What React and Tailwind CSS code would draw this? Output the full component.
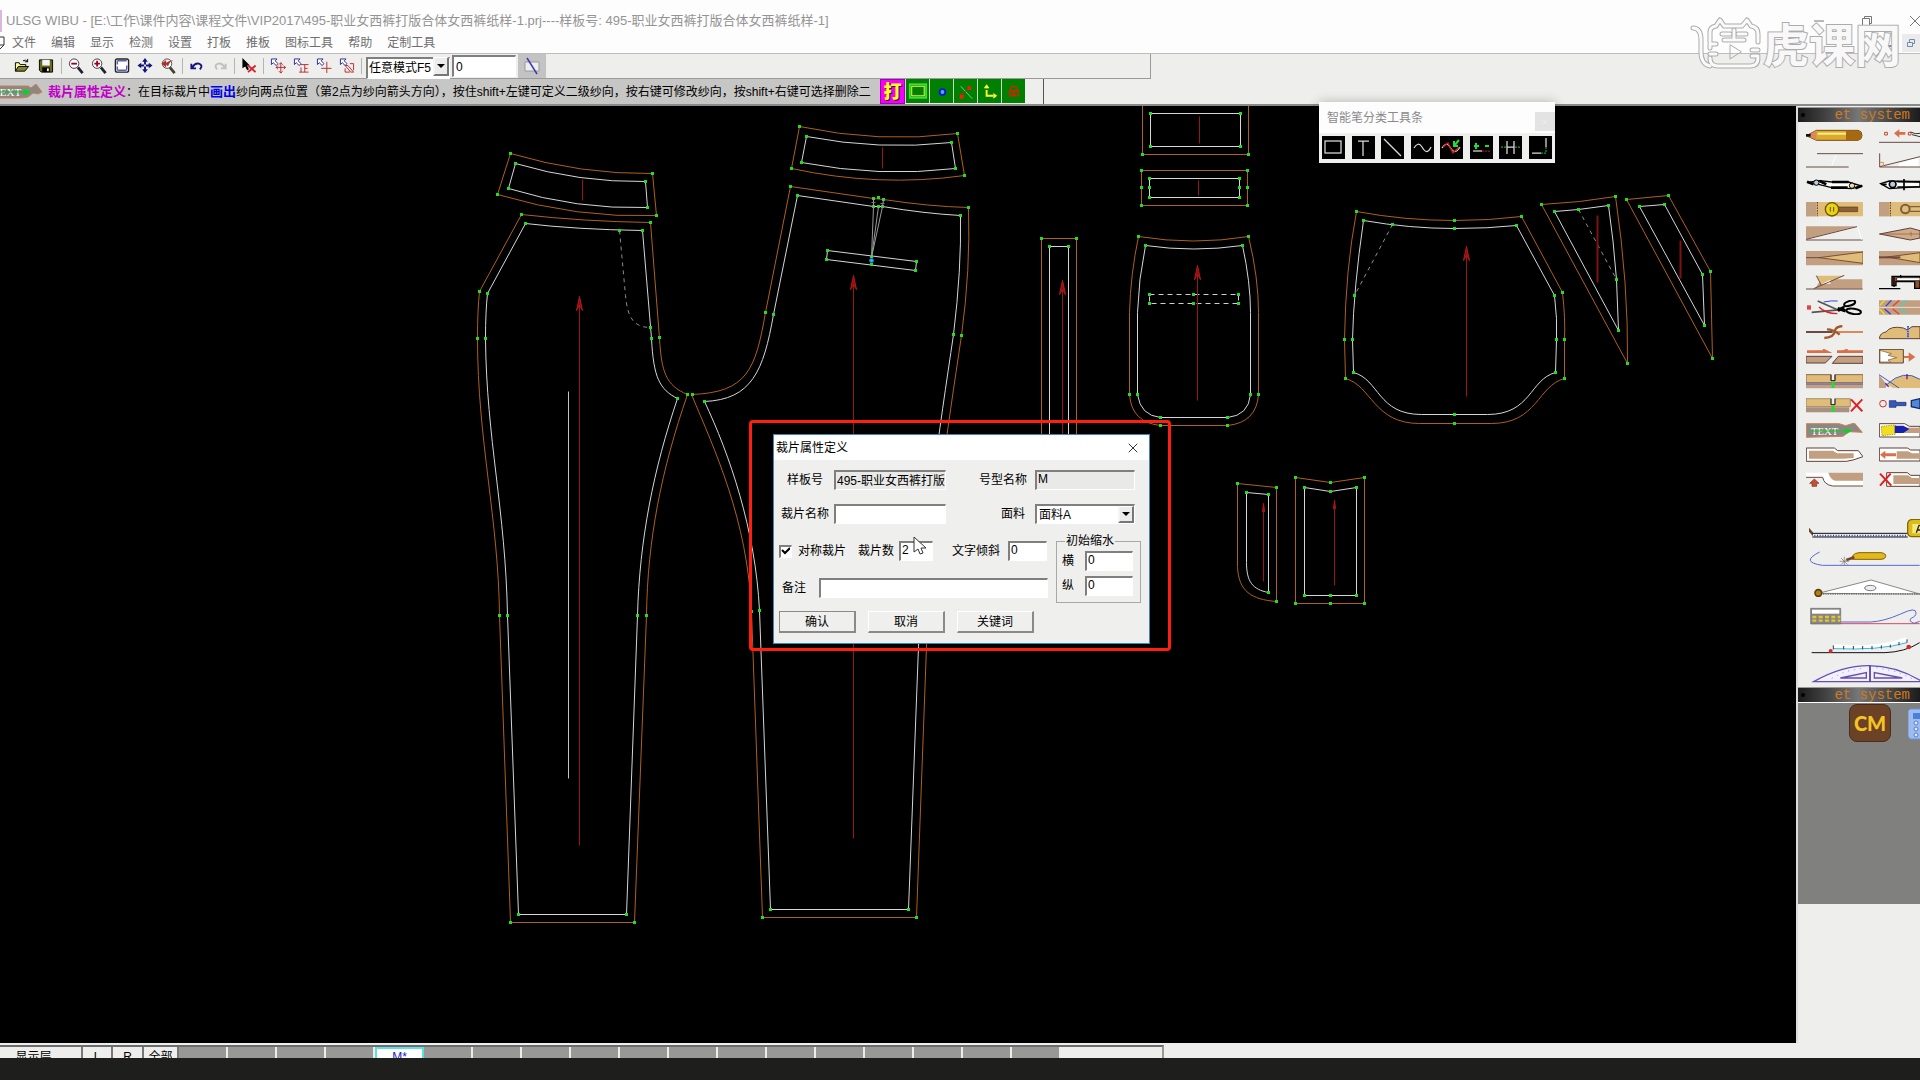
import { X } from "lucide-react";

const menus = ["文件", "编辑", "显示", "检测", "设置", "打板", "推板", "图标工具", "帮助", "定制工具"];

const sunken =
  "border-t-2 border-l-2 border-r border-b border-t-[#7f7f7f] border-l-[#7f7f7f] border-r-white border-b-white";

/* ---------- top toolbar ---------- */

const toolbarGroups = [
  [
    {
      name: "新建",
      art: <path d="M-8 1H2l4 4v11H-8zM2 1v4h4" fill="#fff" stroke="#000" />,
    },
    {
      name: "打开",
      art: (
        <>
          <path d="M1 14V5h4l1 2h6v3" fill="#ffff9c" stroke="#000" />
          <path d="M1 14l3-5h11l-4 5z" fill="#84842a" stroke="#000" />
          <path d="M9 3q3-2 5 1m0-3v3h-3" fill="none" stroke="#000" />
        </>
      ),
    },
    {
      name: "保存",
      art: (
        <>
          <path d="M1 2h14v13H3l-2-2z" fill="#6b6b1c" stroke="#000" />
          <path d="M4 2h8v6H4z" fill="#f4f4f4" />
          <path d="M4 10h8v5H4z" fill="#000" />
          <path d="M9 11h2v3H9z" fill="#eee" />
        </>
      ),
    },
  ],
  [
    {
      name: "缩小",
      art: (
        <>
          <circle cx="6" cy="6" r="5" fill="#fff" stroke="#334" />
          <path d="M10 10l5 6" stroke="#223" strokeWidth="3" />
          <path d="M3 6h6" stroke="#a00020" strokeWidth="2" />
        </>
      ),
    },
    {
      name: "放大",
      art: (
        <>
          <circle cx="6" cy="6" r="5" fill="#fff" stroke="#334" />
          <path d="M10 10l5 6" stroke="#223" strokeWidth="3" />
          <path d="M3 6h6M6 3v6" stroke="#a00020" strokeWidth="2" />
        </>
      ),
    },
    {
      name: "全屏",
      art: (
        <>
          <rect x="1" y="1" width="14" height="14" rx="2" fill="#fff" stroke="#222" strokeWidth="1.5" />
          <path d="M3 7V4q0-1 1-1h9M3 9v3q0 1 1 1h8q1 0 1-2V8" fill="none" stroke="#5563b5" strokeWidth="1.5" />
        </>
      ),
    },
    {
      name: "移动",
      art: (
        <>
          <path d="M8 2v12M2 8h12" stroke="#14147c" strokeDasharray="5 2" strokeWidth="2" />
          <path d="M8 0l3 4H5zM8 16l3-4H5zM0 8l4-3v6zM16 8l-4-3v6z" fill="#14147c" />
        </>
      ),
    },
    {
      name: "上一视图",
      art: (
        <>
          <circle cx="7" cy="6" r="5" fill="#fff" stroke="#444" />
          <path d="M10 10l5 6" stroke="#443" strokeWidth="3" />
          <path d="M1 6l5-4v3q5-3 8-3-4 1-6 7L6 7v3z" fill="#b0302a" />
        </>
      ),
    },
  ],
  [
    {
      name: "撤销",
      art: (
        <path d="M2 6v5h5M3 10q3-5 7-4 5 2 1 6" fill="none" stroke="#14147c" strokeWidth="2" />
      ),
    },
    {
      name: "重做",
      art: (
        <path d="M14 6v5H9M13 10q-3-5-7-4-5 2-1 6" fill="none" stroke="#c0c0c0" strokeWidth="2" />
      ),
    },
  ],
  [
    {
      name: "删除",
      art: (
        <>
          <path d="M1 0l8 8H6l2 4-2 1-2-4-3 2z" fill="#000" />
          <path d="M7 8l8 7M15 8l-8 7" stroke="#d3232c" strokeWidth="2" />
        </>
      ),
    },
  ],
  [
    { name: "定点移动", art: <ArrowMark><path d="M11 5v11M6 10h10M9 7l2-2 2 2M9 14l2 2 2-2M8 8l-2 2 2 2M14 8l2 2-2 2" /></ArrowMark> },
    { name: "对正", art: <ArrowMark><path d="M7 7h9M6 15h10M12 7v8M8 10v5M12 11h3" /></ArrowMark> },
    { name: "十字", art: <ArrowMark><path d="M11 4v12M5 11h11" /></ArrowMark> },
    { name: "镜像", art: <ArrowMark><path d="M6 8h3l6 7h-3zM11 6h4v7M6 11v4h5" /></ArrowMark> },
  ],
];

function ArrowMark({ children }) {
  return (
    <>
      <path d="M1 1h6L5 3l3 3-2 2-3-3-2 2z" fill="#fff" stroke="#25259a" />
      <g fill="none" stroke="#b5292d">
        {children}
      </g>
    </>
  );
}

function Toolbar() {
  return (
    <div className="flex h-[25px] bg-[#eeeeec]">
      <div className="flex w-[1151px] items-center border-r border-b border-[#9a9a9a]">
        {toolbarGroups.map((group, i) => (
          <div
            key={i}
            className={
              i === 0
                ? "-ml-[10px] flex gap-2 border-r border-[#b4b4b4] pr-[7px]"
                : "flex gap-[7px] border-r border-[#b4b4b4] px-[6px]"
            }
          >
            {group.map((t) => (
              <button key={t.name} aria-label={t.name} className="h-4 w-4">
                <svg viewBox="0 0 16 17" className="h-4 w-4">
                  {t.art}
                </svg>
              </button>
            ))}
          </div>
        ))}
        <div className="relative ml-[4px] h-[22px] w-[84px]">
          <select
            aria-label="模式"
            className={`h-full w-full appearance-none bg-white pl-px text-xs leading-4 text-black ${sunken}`}
          >
            <option>任意模式F5</option>
          </select>
          <DropArrow />
        </div>
        <input
          aria-label="数值"
          defaultValue="0"
          className={`ml-[2px] h-[22px] w-16 bg-white pl-[2px] text-xs leading-4 ${sunken}`}
        />
        <button aria-label="线条" className="ml-[2px] flex h-6 w-7 items-center justify-center bg-[#c3c3c3]">
          <svg viewBox="0 0 18 18" className="h-[18px] w-[18px]">
            <path d="M2 5h14v9H2z" fill="#eee" stroke="#999" />
            <path d="M4 1l10 16" stroke="#3b3bae" strokeWidth="1.5" />
          </svg>
        </button>
      </div>
    </div>
  );
}

function DropArrow() {
  return (
    <span className="pointer-events-none absolute top-[2px] right-[1px] bottom-[1px] flex w-4 items-center justify-center border-t border-l-2 border-r-2 border-b-2 border-t-white border-l-[#f4f4f4] border-r-[#777] border-b-[#777] bg-[#ececec]">
      <svg viewBox="0 0 8 4" className="h-1 w-2">
        <path d="M0 0h8L4 4z" fill="#000" />
      </svg>
    </span>
  );
}

/* ---------- hint bar ---------- */

const greenTools = [
  { name: "矩形", art: <rect x="6" y="6" width="13" height="10" fill="none" stroke="#ffff30" strokeWidth="1" />, halo: true },
  { name: "点", art: <><circle cx="13" cy="12" r="4" fill="#0018d8" /><circle cx="13" cy="12" r="2" fill="#5aa6ff" /></> },
  { name: "线", art: <><path d="M7 6l12 13" stroke="#4fe0b0" /><path d="M14 6h4v4h-4zM6 15h4v4H6z" fill="#f02010" /><path d="M12 12l5-5M6 15l6-3" stroke="#c22810" /></> },
  { name: "坐标", art: <><path d="M9 17V6M9 16h9" stroke="#ffff30" strokeWidth="2" fill="none" strokeDasharray="7 2" /><path d="M6 8l3-4 3 4zM16 13l4 3-4 3z" fill="#ffff30" /></> },
  { name: "锁", art: <path d="M8 16h9v-5H8zM9 11V9q0-3 3-3t4 3v2M10 14h5M12 10v6" fill="none" stroke="#c82800" strokeWidth="1.5" /> },
];

function HintBar() {
  return (
    <div className="flex h-[27px] border-b-2 border-[#8a8a8a] bg-[#eeeeec]">
      <div className="flex w-[1044px] border-r border-[#555] bg-[#eeeeec]">
        <div className="flex w-[880px] items-center overflow-hidden bg-[#c6c6c4]">
          <svg viewBox="0 0 42 16" className="h-4 w-[42px] shrink-0">
            <path d="M0 2h28l3 2 5-4 6 8-4 2-5-1-5 4-6 1H0z" fill="#8b8883" stroke="#c88052" />
            <text x="-7" y="12" fontSize="11" fontFamily="Liberation Serif" fill="#fff">TEXT</text>
            <path d="M0 8h26" stroke="#00c520" />
            <path d="M24 5l7 3-7 3z" fill="#00d820" />
          </svg>
          <p className="ml-[6px] text-xs leading-4 whitespace-nowrap text-black">
            <b className="text-[13px] text-[#c000c8]">裁片属性定义</b>
            ：在目标裁片中<b className="text-[13px] text-[#0000f0]">画出</b>
            纱向两点位置（第2点为纱向箭头方向），按住shift+左键可定义二级纱向，按右键可修改纱向，按shift+右键可选择删除二
          </p>
        </div>
        <button className="h-[25px] w-[25px] border border-[#a000c0] bg-[#f400f4] text-lg leading-5 font-black text-[#ffff20] [text-shadow:1px_1px_0_#222]">
          打
        </button>
        {greenTools.map((t) => (
          <button key={t.name} aria-label={t.name} className="h-6 w-6 border-l border-[#c8d8c8] bg-[#007f00]">
            <svg viewBox="0 0 24 23" className="h-[23px] w-[23px]">
              {t.halo && <rect x="4" y="4" width="17" height="14" fill="none" stroke="#38e038" strokeWidth="2" />}
              {t.art}
            </svg>
          </button>
        ))}
      </div>
    </div>
  );
}

/* ---------- pattern canvas ---------- */

const pieces = [
  {
    seam: "M511 154Q582 175 653 174L657 216Q578 219 498 195Z",
    net: "M516 164Q580 183 646 182L648 208Q577 210 509 189Z",
    dots: [[511, 154], [653, 174], [657, 216], [498, 195], [516, 164], [646, 182], [648, 208], [509, 189]],
    grain: [583, 180, 201],
  },
  {
    seam: "M522 215Q584 222 651 223L660 339C662 372 666 386 688 395C662 470 648 540 647 616L635 923H511L500 616C499 520 478 440 478 339Q478 310 480 292Z",
    net: "M526 224Q577 230 643 231L652 339C654 378 660 390 678 399C654 470 640 540 638 616L627 915H519L508 616C506 510 487 440 486 339Q486 312 488 294Z",
    dash: "M620 231L626 296C628 318 634 328 651 328",
    dots: [[522, 215], [651, 223], [660, 338], [688, 395], [647, 616], [635, 923], [511, 923], [500, 616], [478, 339], [480, 292], [526, 224], [620, 231], [643, 231], [651, 328], [652, 339], [678, 399], [638, 616], [627, 915], [519, 915], [508, 616], [486, 339], [488, 294]],
    grain: [580, 297, 846],
    arrow: true,
  },
  {
    seam: "M800 127Q880 144 958 134L965 176Q880 188 792 169Z",
    net: "M807 137Q880 151 952 143L956 169Q880 178 802 163Z",
    dots: [[800, 127], [958, 134], [965, 176], [792, 169], [807, 137], [952, 143], [956, 169], [802, 163]],
    grain: [883, 148, 169],
  },
  {
    seam: "M791 187L874 199L884 200Q930 207 969 208Q971 270 962 336C948 430 931 540 927 647L917 918H763L752 612C748 520 715 450 692 395C748 393 756 370 766 313Z",
    net: "M798 196L874 207H883Q925 214 961 216Q962 270 954 335C940 430 923 540 919 647L909 910H771L760 611C756 530 730 455 705 402C752 400 764 372 774 315ZM828 251L917 262L916 271L827 260Z",
    dots: [[791, 187], [874, 199], [879, 198], [884, 200], [969, 208], [962, 336], [917, 918], [763, 918], [752, 612], [693, 395], [766, 313], [798, 196], [874, 207], [879, 207], [883, 207], [961, 216], [954, 335], [909, 910], [771, 910], [760, 611], [705, 402], [774, 315], [828, 251], [917, 262], [916, 271], [827, 260], [872, 257], [872, 265]],
    grain: [854, 276, 839],
    arrow: true,
  },
  {
    seam: "M1143 100V155H1249V100",
    net: "M1151 114H1241V147H1151Z",
    dots: [[1143, 155], [1249, 155], [1151, 114], [1241, 114], [1241, 147], [1151, 147]],
    grain: [1200, 117, 144],
  },
  {
    seam: "M1142 171H1248V206H1142Z",
    net: "M1150 179H1240V198H1150Z",
    dots: [[1142, 171], [1248, 171], [1248, 206], [1142, 206], [1142, 188], [1248, 188], [1150, 179], [1240, 179], [1240, 198], [1150, 198], [1150, 188], [1240, 188]],
    grain: [1199, 181, 196],
  },
  {
    seam: "M1042 560V239H1077V560",
    net: "M1050 560V247H1069V560",
    dots: [[1042, 239], [1077, 239], [1050, 247], [1069, 247]],
    grain: [1063, 281, 560],
    arrow: true,
  },
  {
    seam: "M1139 237Q1194 246 1249 237Q1259 278 1259 313V395Q1257 423 1228 426H1161Q1132 423 1130 395V313Q1131 275 1139 237Z",
    net: "M1146 246Q1194 253 1243 246Q1251 283 1251 313V395Q1249 416 1228 418H1161Q1141 416 1138 395V313Q1139 280 1146 246Z",
    thickDash: "M1150 295H1239V304H1150Z",
    dots: [[1139, 237], [1249, 237], [1259, 395], [1228, 426], [1161, 426], [1130, 395], [1146, 246], [1243, 246], [1251, 395], [1228, 418], [1161, 418], [1138, 395], [1150, 295], [1194, 295], [1239, 295], [1150, 304], [1194, 304], [1239, 304]],
    grain: [1198, 266, 401],
    arrow: true,
  },
  {
    seam: "M1357 212Q1405 221 1455 221Q1490 221 1522 217L1563 293Q1566 320 1565 340V379C1538 386 1538 424 1492 424H1420C1374 424 1372 386 1346 379L1345 340Q1346 270 1357 212Z",
    net: "M1364 221Q1410 229 1455 229Q1488 229 1517 226L1555 296Q1558 320 1557 340L1556 373C1530 380 1532 415 1488 415H1422C1378 415 1380 380 1354 373L1353 340Q1354 290 1364 221Z",
    dash: "M1393 225L1355 296",
    dots: [[1357, 212], [1455, 221], [1522, 217], [1563, 293], [1565, 340], [1565, 379], [1455, 424], [1346, 379], [1345, 340], [1364, 221], [1393, 225], [1455, 229], [1517, 226], [1555, 296], [1557, 340], [1556, 373], [1455, 415], [1354, 373], [1353, 340], [1355, 296]],
    grain: [1467, 247, 397],
    arrow: true,
  },
  {
    seam: "M1542 205L1580 202L1616 197Q1629 285 1628 364Z",
    net: "M1555 212L1579 210L1609 206Q1614 240 1617 280L1619 331Z",
    dash: "M1579 210L1617 280",
    dots: [[1542, 205], [1616, 197], [1628, 364], [1555, 212], [1579, 210], [1609, 206], [1617, 280], [1619, 331]],
    grain: [1598, 216, 283],
    wide: true,
  },
  {
    seam: "M1627 200L1669 196L1711 272L1713 359Z",
    net: "M1640 207L1665 205L1703 275L1705 326Z",
    dots: [[1627, 200], [1669, 196], [1711, 272], [1713, 359], [1640, 207], [1665, 205], [1703, 275], [1705, 326]],
    grain: [1681, 241, 279],
    wide: true,
  },
  {
    seam: "M1238 484L1277 488V602C1252 600 1239 592 1238 567Z",
    net: "M1247 493L1269 495V593C1253 590 1247 582 1247 563Z",
    dots: [[1238, 484], [1277, 488], [1277, 602], [1247, 493], [1269, 495], [1269, 593]],
    grain: [1264, 504, 582],
    shortArrow: true,
  },
  {
    seam: "M1296 478L1331 483L1365 478V604H1296Z",
    net: "M1305 488L1331 492L1357 488V596H1305Z",
    dots: [[1296, 478], [1331, 483], [1365, 478], [1365, 604], [1331, 604], [1296, 604], [1305, 488], [1331, 492], [1357, 488], [1357, 596], [1331, 596], [1305, 596]],
    grain: [1335, 501, 586],
    shortArrow: true,
  },
];

function PatternCanvas() {
  return (
    <svg className="absolute inset-0 h-full w-full" role="img" aria-label="裁片">
      <g transform="translate(-0.5 -106.5)" fill="none">
        {pieces.map((p, i) => (
          <g key={i}>
            <path d={p.seam} stroke="#b0601c" />
            <path d={p.net} stroke="#d6d6d6" />
            {p.dash && <path d={p.dash} stroke="#8c8c8c" strokeDasharray="4 4" />}
            {p.thickDash && <path d={p.thickDash} stroke="#d0d0d0" strokeDasharray="5 4" />}
            <path
              d={`M${p.grain[0]} ${p.grain[1]}V${p.grain[2]}`}
              stroke={p.wide ? "#7c1212" : "#981616"}
              strokeWidth={p.wide ? 2 : 1}
            />
            {p.arrow && (
              <path
                d={`M${p.grain[0] - 3} ${p.grain[1] + 14}L${p.grain[0]} ${p.grain[1]}l3 14l-3 -5z`}
                fill="#8c1010"
                stroke="#b41818"
              />
            )}
            {p.shortArrow && (
              <path
                d={`M${p.grain[0] - 1} ${p.grain[1] + 8}L${p.grain[0]} ${p.grain[1]}l1 8z`}
                fill="#8c1010"
                stroke="#b41818"
              />
            )}
            {p.dots.map(([x, y]) => (
              <rect key={`${x}-${y}`} x={x - 1.5} y={y - 1.5} width="3" height="3" fill="#1fe01f" />
            ))}
          </g>
        ))}
        <path d="M569 392V779" stroke="#c4c4c4" />
        <path d="M872 258L874 207M872 258L879 207M872 258L883 207M874 199V207M884 200L883 207" stroke="#9a9a9a" />
        <path d="M872 203h4M881 204h4" stroke="#b050c0" />
        <circle cx="872" cy="261" r="2" fill="#20c0d0" stroke="#2060ff" />
      </g>
    </svg>
  );
}

/* ---------- floating pen toolbar ---------- */

const penTools = [
  { name: "矩形", art: <rect x="3" y="5" width="16" height="12" /> },
  { name: "丁字尺", art: <path d="M6 5h11M11 5v15" /> },
  { name: "直线", art: <path d="M3 3l17 17" /> },
  { name: "曲线", art: <path d="M3 12q4-7 8-1 5 9 9 0" /> },
  { name: "修正曲线", art: <><path d="M2 12q4-7 8-1 5 9 10 0" /><path d="M3 11l5-4 5 10 6-6" stroke="#e01818" /><path d="M19 4l-5 6m0-5v5h4" stroke="#20e030" strokeWidth="2" /></> },
  { name: "加减", art: <><path d="M4 10h5M6 7v6M15 10h4" stroke="#20e030" strokeWidth="2" /><path d="M3 15h9" /><path d="M12 15h8" stroke="#b01010" strokeDasharray="2 1" /></> },
  { name: "等分", art: <><path d="M8 5v13M15 5v13M8 11h7" /><path d="M2 11h5M16 11h5" stroke="#20a030" strokeDasharray="2 1" /></> },
  { name: "角连接", art: <><path d="M3 17h9M17 2v9" /><path d="M12 17h5v-6" stroke="#10a020" strokeDasharray="2 1" /></> },
];

function PenBar() {
  return (
    <div className="absolute -top-1 left-[1319px] w-[236px] bg-[#efefed] shadow-[0_0_10px_rgba(0,0,0,0.25)]">
      <div className="flex h-[31px] items-center justify-between bg-[#fdfdfd] pl-2">
        <h2 className="text-xs leading-4 text-[#8a8a8a]">智能笔分类工具条</h2>
        <button aria-label="关闭" className="mt-2 flex h-[19px] w-5 items-center justify-center bg-[#e3e3e3]">
          <X size={8} color="#f0f0f0" />
        </button>
      </div>
      <div className="flex justify-between px-[3px] pt-[3px] pb-1">
        {penTools.map((t) => (
          <button key={t.name} aria-label={t.name} className="h-[23px] w-[23px] bg-black">
            <svg viewBox="0 0 23 23" className="h-[23px] w-[23px]" fill="none" stroke="#dcdcdc" strokeWidth="1.25">
              {t.art}
            </svg>
          </button>
        ))}
      </div>
    </div>
  );
}

/* ---------- piece property dialog ---------- */

function Field({ id, label, width, value, gray, className }) {
  return (
    <div className={`flex items-center justify-end ${className || ""}`}>
      <label htmlFor={id} className="whitespace-nowrap">
        {label}
      </label>
      <input
        id={id}
        defaultValue={value}
        readOnly={gray}
        className={`h-5 min-w-0 pb-[3px] pl-px leading-4 ${sunken} ${gray ? "bg-[#e9e9e7]" : "bg-white"} ${width}`}
      />
    </div>
  );
}

function PropertyDialog() {
  const raised =
    "h-[22px] w-[77px] border-t border-l border-r-2 border-b-2 border-t-white border-l-white border-r-[#8a8a8a] border-b-[#8a8a8a] bg-[#efefed]";
  return (
    <div className="absolute top-[314px] left-[749px] rounded border-[3px] border-[#ff1e10] pt-[11px] pr-[18px] pb-1 pl-[21px]">
      <div className="w-[377px] border border-[#3f86bd] bg-[#efefed] text-xs leading-4 text-black">
        <div className="flex h-[25px] items-center justify-between bg-white pr-2 pl-[2px]">
          <h2>裁片属性定义</h2>
          <button aria-label="关闭">
            <X size={16} strokeWidth={1.5} color="#333" />
          </button>
        </div>
        <form className="px-1 pt-[10px] pb-[10px]" onSubmit={(e) => e.preventDefault()}>
          <div className="flex justify-between pr-[10px]">
            <Field id="style" label="样板号" width="ml-[11px] w-28" value="495-职业女西裤打版合体女西裤纸样-1" gray className="pl-[9px]" />
            <Field id="size" label="号型名称" width="ml-2 w-[100px]" value="M" gray />
          </div>
          <div className="mt-[14px] flex justify-between pr-[10px]">
            <Field id="piece" label="裁片名称" width="ml-[5px] w-28" className="pl-[3px]" />
            <div className="flex items-center">
              <label htmlFor="fabric">面料</label>
              <div className="relative ml-[10px] h-5 w-[100px]">
                <select id="fabric" className={`h-full w-full appearance-none bg-white pl-[2px] text-xs leading-4 ${sunken}`}>
                  <option>面料A</option>
                </select>
                <DropArrow />
              </div>
            </div>
          </div>
          <div className="mt-[9px] flex gap-2">
            <div className="w-[270px] pt-2 pl-px">
              <div className="flex items-center">
                <label className="flex items-center gap-[6px] whitespace-nowrap">
                  <span className={`relative flex h-[13px] w-[13px] bg-white ${sunken}`}>
                    <input type="checkbox" defaultChecked className="peer h-full w-full appearance-none" />
                    <svg viewBox="0 0 9 9" className="pointer-events-none absolute inset-0 hidden h-[9px] w-[9px] peer-checked:block">
                      <path d="M1 3l3 3 5-5" fill="none" stroke="#000" strokeWidth="2" />
                    </svg>
                  </span>
                  对称裁片
                </label>
                <Field id="count" label="裁片数" width="ml-[5px] w-[34px]" value="2" className="ml-3" />
                <Field id="slant" label="文字倾斜" width="ml-2 w-[39px]" value="0" className="ml-[19px]" />
              </div>
              <Field id="note" label="备注" width="ml-[13px] flex-1" className="mt-[17px] pl-[3px]" />
            </div>
            <fieldset className="h-[70px] w-[84px] border border-[#a8a8a8] pl-[5px]">
              <legend className="ml-[3px] px-px leading-4">初始缩水</legend>
              <Field id="weft" label="横" width="ml-[11px] w-12" value="0" className="mt-[2px] mr-[7px]" />
              <Field id="warp" label="纵" width="ml-[11px] w-12" value="0" className="mt-[5px] mr-[7px]" />
            </fieldset>
          </div>
          <div className="mt-2 flex gap-3 pl-px">
            <button className={`${raised} outline outline-[#8a8a8a] -outline-offset-1`}>确认</button>
            <button className={raised}>取消</button>
            <button className={raised}>关键词</button>
          </div>
        </form>
      </div>
    </div>
  );
}

function MousePointer() {
  return (
    <svg viewBox="0 0 13 20" className="absolute top-[430px] left-[913px] h-5 w-[13px]">
      <path d="M1 1v15l4-3 2 5 3-1-2-5h5z" fill="#fff" stroke="#333" />
    </svg>
  );
}

/* ---------- right tool box ---------- */

const line = { fill: "none", stroke: "#6b4a44", strokeWidth: 3 };

// each drawing keeps three units to one screen pixel
const leftTools = [
  { name: "铅笔", y: 82, art: <><path d="M78 105l30-16h125q12 2 12 15t-12 15H108z" fill="#dba92c" stroke="#7b4a18" strokeWidth="3" /><path d="M108 89v30L82 105z" fill="#d88a58" /><path d="M112 99h86" stroke="#fff08a" strokeWidth="6" /><path d="M197 90h34q12 2 12 15t-12 14h-34z" fill="#a56a10" /><path d="M77 104h14" stroke="#111" strokeWidth="8" /></> },
  { name: "平行线", y: 156, art: <><path d="M110 158h138M77 198h128" {...line} /><path d="M154 194l14-32" stroke="#fff" strokeWidth="3" /></> },
  { name: "圆规", y: 228, art: <><path d="M82 244l36-5 36 4h50l40 12-30 8-60-3-36-9z" fill="#fff" stroke="#000" strokeWidth="4" /><path d="M118 240l20 10M155 243h50M152 260h50M80 242l20 8M245 254l-20 8" stroke="#000" strokeWidth="8" /><circle cx="108" cy="245" r="8" fill="#bcd" stroke="#000" strokeWidth="3" /><circle cx="215" cy="254" r="8" fill="#eda" stroke="#000" strokeWidth="3" /></> },
  { name: "扣眼", y: 304, art: <><path d="M77 304h171v43H77z" fill="#dfbd78" /><path d="M77 304h30v43H77z" fill="#c29f80" /><path d="M111 304v43" stroke="#503028" strokeWidth="3" strokeDasharray="5 3" /><path d="M170 319h62v14h-62z" fill="#8b6035" stroke="#5a3818" strokeWidth="2" /><circle cx="155" cy="326" r="20" fill="#e8d410" stroke="#725010" strokeWidth="4" /><path d="M150 319v14M160 319v14" stroke="#724d10" strokeWidth="3" /></> },
  { name: "角度", y: 377, art: <><path d="M77 378h153L77 416z" fill="#c29f80" /><path d="M77 417l153-38M77 419h170" {...line} /><path d="M232 382l12 36" stroke="#fff" strokeWidth="3" /></> },
  { name: "省道", y: 451, art: <><path d="M77 451h171v43H77z" fill="#c29f80" /><path d="M248 454L116 471l132 17z" fill="#dfbd78" stroke="#7b5030" strokeWidth="3" /><path d="M77 471h40" {...line} /></> },
  { name: "转省", y: 524, art: <><path d="M122 537h124v28H104z" fill="#c29f80" /><path d="M108 526h84l-68 29z" fill="#dfbd78" /><path d="M126 550l24-12v12z" fill="#fff" /><path d="M108 526l15 29M100 565l92-40M77 566h170" {...line} /></> },
  { name: "剪刀", y: 597, art: <><path d="M80 613h12v13H80z" fill="#d84848" /><path d="M112 600l68 30M94 634l90-8" stroke="#555" strokeWidth="5" /><path d="M130 603q25-5 42-3" stroke="#3048d0" strokeWidth="3" fill="none" /><path d="M116 618q20 20 55 20" stroke="#e02020" strokeWidth="4" fill="none" /><path d="M172 628l20-10M172 622l24 8" stroke="#000" strokeWidth="9" /><ellipse cx="208" cy="607" rx="17" ry="7" transform="rotate(-18 208 607)" fill="none" stroke="#000" strokeWidth="6" /><ellipse cx="220" cy="631" rx="22" ry="8" transform="rotate(8 220 631)" fill="none" stroke="#000" strokeWidth="6" /></> },
  { name: "缝合", y: 671, art: <><path d="M77 692h80" stroke="#6a4a42" strokeWidth="6" /><path d="M160 692h88" stroke="#d88a58" strokeWidth="6" /><path d="M132 710q30-2 32-22 2-12 22-14M140 684q20 0 38 16" fill="none" stroke="#a05828" strokeWidth="7" /></> },
  { name: "分割", y: 744, art: <><path d="M77 766h78l-20 20H77zM174 766h74v21h-92z" fill="#c29f80" stroke="#604038" strokeWidth="3" /><path d="M80 752h55m35 0h78" stroke="#d87048" strokeWidth="8" /><path d="M128 742l28 14h-30zM202 742l-34 14h34z" fill="#d87048" /></> },
  { name: "刀口", y: 818, art: <><path d="M77 820h75v18h12v-18h84v24H77z" fill="#dfbd78" stroke="#8a6848" strokeWidth="3" /><path d="M77 846h171v15H77z" fill="#c29f80" /><path d="M77 848h171" stroke="#4858c8" strokeWidth="3" /><path d="M152 820v18h12v-18" fill="none" stroke="#222" strokeWidth="3" /><path d="M158 842v18" stroke="#20e020" strokeWidth="8" /></> },
  { name: "删除刀口", y: 20, art: <><path d="M77 22h75v18h12v-18h46v24H77z" fill="#dfbd78" stroke="#8a6848" strokeWidth="2" /><path d="M77 48h130v15H77z" fill="#a89080" /><path d="M152 22v18h12v-18" fill="none" stroke="#222" strokeWidth="3" /><path d="M158 44v18" stroke="#20e020" strokeWidth="8" /><path d="M212 24l34 36M246 24l-34 36" stroke="#e02020" strokeWidth="6" /></> },
  { name: "裁片属性", y: 94, art: <><path d="M78 96h98l20 6 26-8 24 28-40-2-18 14-110 3z" fill="#8b8883" stroke="#d08050" strokeWidth="3" /><text x="92" y="129" fontFamily="Liberation Serif" fontSize="32" fill="#fff">TEXT</text><path d="M90 118h110" stroke="#10d020" strokeWidth="3" /><path d="M196 108l18 10-18 10z" fill="#10d020" /></> },
  { name: "放缝", y: 167, art: <><path d="M78 170h84l10 8h62l14 18-30 10-20 4H78z" fill="#fff" stroke="#604038" strokeWidth="3" /><path d="M86 178h72l12 8h50v14l-30 2H86z" fill="#c29f80" /></> },
  { name: "缝边", y: 240, art: <><path d="M77 242h171v40h-90q-26-4-30-26H77z" fill="#fff" /><path d="M144 242h104v24h-84q-14-4-20-24z" fill="#c29f80" /><path d="M77 256h50q4 22 30 26h91" {...line} /><path d="M102 261l14 13h-7v9H95v-9h-7z" fill="#c85030" stroke="#703020" strokeWidth="2" /></> },
];

const rightTools = [
  { name: "端移动", y: 82, art: <><path d="M297 125h123" {...line} /><path d="M314 95h8v8h-8zM385 95h8v8h-8z" fill="#fff" stroke="#c04028" strokeWidth="3" /><path d="M342 98l16-12v8h18v8h-18v9z" fill="#d87048" /><path d="M392 94q14 8 28 4M396 102l24 6" {...line} stroke="#333" /></> },
  { name: "量角", y: 156, art: <><path d="M356 188l60-20v30h-60z" fill="#fff" /><path d="M299 157v41h121M299 197l121-30" {...line} /><path d="M300 184h10v12" fill="none" stroke="#e09040" strokeWidth="3" /></> },
  { name: "双圆规", y: 228, art: <><path d="M302 248l26-8 92 3v14l-92 6z" fill="#fff" stroke="#000" strokeWidth="4" /><path d="M352 242h68M352 258h68M372 234v34M304 250h16" stroke="#000" strokeWidth="5" /><circle cx="338" cy="250" r="10" fill="#bcd" stroke="#000" strokeWidth="5" /></> },
  { name: "扣位", y: 304, art: <><path d="M297 304h123v43H297z" fill="#dfbd78" /><path d="M297 304h30v43h-30z" fill="#c29f80" /><path d="M331 304v43" stroke="#503028" strokeWidth="3" strokeDasharray="5 3" /><circle cx="376" cy="325" r="13" fill="none" stroke="#7b6040" strokeWidth="6" /><path d="M388 318h32M388 332h32" stroke="#7b6040" strokeWidth="4" /></> },
  { name: "菱形省", y: 377, art: <><path d="M299 401l92-18 29 8v22l-29 6z" fill="#d0ab88" stroke="#604038" strokeWidth="3" /><path d="M297 401h123M393 394v14" stroke="#905848" strokeWidth="2" /></> },
  { name: "褶", y: 451, art: <><path d="M297 451h123v43H297z" fill="#c29f80" /><path d="M420 456l-98 13 98 17z" fill="#dfbd78" stroke="#7b5030" strokeWidth="3" /><path d="M297 470h64" stroke="#704a38" strokeWidth="6" /></> },
  { name: "缝纫机", y: 524, art: <><path d="M336 528h84v36h-16v-20h-56v12h-12z" fill="#8b5228" stroke="#000" strokeWidth="4" /><path d="M350 532h70v9h-70z" fill="#fff" stroke="#000" strokeWidth="2" /><path d="M297 565h64M342 527v33M362 524v8" stroke="#000" strokeWidth="4" /></> },
  { name: "纹理", y: 597, art: <><path d="M297 598h123v43H297z" fill="#c29f80" /><g fill="none" strokeWidth="4"><path d="M314 598l-14 14M298 624l16 16" stroke="#f0e020" /><path d="M334 598l-17 18M314 624l18 16" stroke="#3840d0" /><path d="M358 598l-20 18M338 624l20 16" stroke="#e04040" /><path d="M380 598l-20 18M360 624l20 16" stroke="#40d8b8" /></g><path d="M297 619h123" stroke="#fff" strokeWidth="2" /></> },
  { name: "拼接", y: 671, art: <><path d="M298 712q2-18 20-20 14-20 52-12l12 6 14-10h24v36z" fill="#dfbd78" stroke="#604038" strokeWidth="3" /><path d="M384 674v38" stroke="#4060e0" strokeWidth="6" strokeDasharray="5 2" /></> },
  { name: "展开", y: 744, art: <><path d="M298 745h72v41h-72z" fill="#dfbd78" stroke="#604038" strokeWidth="3" /><path d="M300 748l34 10-10 5 26 7-26 7 8 6h-32z" fill="#fff" stroke="#7b5030" strokeWidth="2" /><path d="M372 768h16" stroke="#c85838" strokeWidth="5" /><path d="M386 754l20 14-20 14z" fill="#d87048" /></> },
  { name: "弧线", y: 818, art: <><path d="M297 820l24 30-4 10h-20z" fill="#c29f80" /><path d="M320 850q60-50 100-14v24h-80z" fill="#dfbd78" /><path d="M297 820l60 40M320 850q50-48 100-16" fill="none" stroke="#4858b8" strokeWidth="3" /><path d="M381 818v16M316 846l10 10" stroke="#6020b0" strokeWidth="4" /></> },
  { name: "打孔", y: 20, art: <><circle cx="309" cy="37" r="10" fill="none" stroke="#d03030" strokeWidth="3" /><path d="M328 28h20v5h30v10h-30v5h-20z" fill="#3858b8" stroke="#182868" strokeWidth="2" /><path d="M394 28l26-6v30l-26-6z" fill="#5088d8" stroke="#182868" strokeWidth="4" /></> },
  { name: "刷子", y: 94, art: <><path d="M298 96h76l14 8h32v32H298z" fill="#fff" stroke="#604038" strokeWidth="3" /><path d="M370 108h50v16h-50z" fill="#c29f80" /><path d="M304 104l42-4v28l-40 4z" fill="#f0e020" stroke="#807010" strokeWidth="2" strokeDasharray="4 3" /><path d="M344 102h26l18 10-18 12h-26z" fill="#1820b0" /></> },
  { name: "内缝", y: 167, art: <><path d="M298 170h84l10 6h28v33H298z" fill="#fff" stroke="#604038" strokeWidth="3" /><path d="M350 180h34l12 6h24v16h-70z" fill="#c29f80" /><path d="M300 190l16-12v8h32v9h-32v8z" fill="#d87048" /></> },
  { name: "删除缝边", y: 240, art: <><path d="M320 242h62l10 8h28v33H320z" fill="#fff" stroke="#604038" strokeWidth="3" /><path d="M340 250h44l12 8h24v18h-80z" fill="#c29f80" /><path d="M300 245l34 36M332 245l-32 36" stroke="#e02020" strokeWidth="6" /></> },
];

const wideTools = [
  { name: "卷尺", y: 387, art: <><path d="M88 413l12 14v12l-12-14z" fill="#6b4528" /><path d="M98 430h286M98 441h286" stroke="#111" strokeWidth="3" /><path d="M104 437h280" stroke="#2838b8" strokeWidth="5" strokeDasharray="3 5" /><path d="M384 400q2-12 16-12h24v52h-28q-12-2-12-12z" fill="#dcbc18" stroke="#806808" strokeWidth="4" /><path d="M398 402h24v28h-24z" fill="#f4e880" /><path d="M410 428l8-22h4M413 420h8" fill="none" stroke="#222" strokeWidth="4" /></> },
  { name: "割刀", y: 472, art: <><path d="M120 484q-60 30 8 40h292" fill="none" stroke="#5868d0" strokeWidth="3" /><path d="M218 496q8-10 20-10h66q16 2 14 12-2 8-14 8h-86z" fill="#e4b818" stroke="#806008" strokeWidth="3" /><path d="M200 508l24-8" stroke="#7a4028" strokeWidth="8" /><path d="M180 512h28M194 498v28M184 502l20 20M204 502l-20 20" stroke="#777" strokeWidth="2" /></> },
  { name: "三角尺", y: 557, art: <><path d="M116 606l158-40 146 42z" fill="#fff" stroke="#888" strokeWidth="3" /><path d="M130 608h290" stroke="#444" strokeWidth="3" strokeDasharray="4 3" /><ellipse cx="272" cy="590" rx="17" ry="8" fill="#eee" stroke="#777" strokeWidth="3" /><circle cx="116" cy="605" r="10" fill="#b08018" stroke="#604008" strokeWidth="5" /></> },
  { name: "计算", y: 645, art: <><path d="M93 652h90v47H93z" fill="#858585" stroke="#666" strokeWidth="2" /><path d="M97 656h82v12H97z" fill="#fff" /><path d="M98 678h84M98 689h84" stroke="#e4c430" strokeWidth="7" strokeDasharray="12 7" /><path d="M183 698h237" stroke="#e04858" strokeWidth="3" /><path d="M183 693h90q40-2 90-24 46-22 46-4 0 12-14 16-10 10 8 16l17-6" fill="none" stroke="#5868d0" strokeWidth="3" /></> },
  { name: "曲线尺", y: 731, art: <><path d="M96 784h220q60-2 104-30" fill="none" stroke="#111" strokeWidth="3" /><path d="M160 766q140 10 222-22" fill="none" stroke="#fff" strokeWidth="14" /><path d="M160 772q140 6 222-18" fill="none" stroke="#38b8d0" strokeWidth="3" /><path d="M161 762v12M192 764v10M221 764v10M249 764v10M277 764v10M305 762v10M332 760v9M358 752v10M382 744v10" stroke="#1c3490" strokeWidth="3" /><circle cx="153" cy="779" r="6" fill="#d82828" /><circle cx="387" cy="767" r="7" fill="#d82828" /></> },
  { name: "量角器", y: 813, art: <><path d="M102 866q168-96 326 0z" fill="#f4f0ff" stroke="#6450b4" strokeWidth="4" /><path d="M271 818v48" stroke="#4c389c" strokeWidth="5" /><path d="M182 855l78-16v16zM284 839v16h84z" fill="#efefed" stroke="#6450b4" strokeWidth="4" /><path d="M156 856l40-20 60-12M290 824l60 12 50 22" fill="none" stroke="#60c8e0" strokeWidth="3" strokeDasharray="4 14" /></> },
];

function BoxHeader() {
  return (
    <div className="flex h-[15px] items-center justify-between border-t border-[#999] bg-linear-to-r from-[#1c1c1c] via-[#777] to-[#1c1c1c] pr-[10px] pl-[3px]">
      <span className="h-1 w-1 rounded-full bg-black" />
      <h2 className="font-['Liberation_Mono',monospace] text-sm leading-[14px] whitespace-nowrap text-[#cf7a1c]">et system</h2>
    </div>
  );
}

function ToolBox() {
  return (
    <aside className="flex w-[124px] shrink-0 flex-col overflow-hidden border-l-2 border-[#dcdcdc] bg-[#eeeeec] pt-px">
      <BoxHeader />
      <div className="mt-[6px] flex gap-4 pl-2">
        <div className="flex h-[359px] flex-col justify-between">
          {leftTools.map((t) => (
            <button key={t.name} aria-label={t.name} className="h-[15px] w-[57px]">
              <svg viewBox={`77 ${t.y} 171 45`} className="h-[15px] w-[57px]">{t.art}</svg>
            </button>
          ))}
        </div>
        <div className="flex h-[359px] flex-col justify-between">
          {rightTools.map((t) => (
            <button key={t.name} aria-label={t.name} className="h-[15px] w-[41px]">
              <svg viewBox={`297 ${t.y} 123 45`} className="h-[15px] w-[41px]">{t.art}</svg>
            </button>
          ))}
        </div>
      </div>
      <div className="mt-8 mb-[3px] flex flex-col gap-[9px] pl-[10px]">
        {wideTools.map((t) => (
          <button key={t.name} aria-label={t.name} className="h-5 w-28">
            <svg viewBox={`85 ${t.y} 336 60`} className="h-5 w-28">{t.art}</svg>
          </button>
        ))}
      </div>
      <BoxHeader />
      <div className="flex h-[202px] items-start gap-[17px] border-t border-white bg-[#80807e] pt-px pl-[51px]">
        <button className="h-[38px] w-[42px] shrink-0 rounded-lg border border-[#4a2c1c] bg-[#6b4226] font-['Lato',sans-serif] text-xl leading-5 font-black text-[#f5c322]">
          CM
        </button>
        <button aria-label="计算器" className="mt-1 h-8 w-3 shrink-0">
          <svg viewBox="0 0 12 32" className="h-8 w-3">
            <path d="M2 1h14v30H2l-2-3V3z" fill="#9ebcf0" stroke="#6a92d8" />
            <path d="M5 5h10v6H5z" fill="#4c80d8" />
            <g fill="#dce8ff" stroke="#5580c8">
              <circle cx="8" cy="15" r="2" />
              <circle cx="8" cy="21" r="2" />
              <circle cx="8" cy="27" r="2" />
            </g>
          </svg>
        </button>
      </div>
    </aside>
  );
}

/* ---------- header and status bar ---------- */

function Watermark() {
  return (
    <svg viewBox="0 0 212 56" className="pointer-events-none absolute top-4 right-[18px] z-10 h-14 w-[212px]">
      <g fill="none" strokeLinejoin="round" strokeLinecap="round">
        <g stroke="#acacac" strokeWidth="5">
          <path d="M3 12q8 0 8 12v12q0 12 9 14" />
          <path d="M20 32v-4h6M20 38h6M20 26v-10q0-5 6-6l4-6 4 6h18l5-6 4 6q7 1 7 8v8M68 34h-6M68 40h-6M20 42q0 8 8 8h32q8 0 8-8" />
          <path d="M32 18h8M48 18h8M34 24h20M44 14v10" />
        </g>
        <g stroke="#fafafa" strokeWidth="3">
          <path d="M3 12q8 0 8 12v12q0 12 9 14" />
          <path d="M20 32v-4h6M20 38h6M20 26v-10q0-5 6-6l4-6 4 6h18l5-6 4 6q7 1 7 8v8M68 34h-6M68 40h-6M20 42q0 8 8 8h32q8 0 8-8" />
          <path d="M32 18h8M48 18h8M34 24h20M44 14v10" />
        </g>
        <path d="M40 29v14l11-7z" stroke="#acacac" />
      </g>
      <text
        x="73"
        y="46"
        fontSize="46"
        fontWeight="700"
        fontFamily="'Noto Sans CJK SC', sans-serif"
        fill="#f8f8f8"
        stroke="#acacac"
        strokeWidth="2"
        paintOrder="stroke"
      >
        虎课网
      </text>
    </svg>
  );
}

function TitleBar() {
  return (
    <header className="relative border-b border-[#bdbdbd] bg-[#fdfdfd]">
      <div className="flex items-center justify-between pt-[10px]">
        <h1 className="border-l-2 border-[#d8b8dc] pl-1 text-[13px] leading-[22px] text-[#949494]">
          ULSG WIBU - [E:\工作\课件内容\课程文件\VIP2017\495-职业女西裤打版合体女西裤纸样-1.prj----样板号: 495-职业女西裤打版合体女西裤纸样-1]
        </h1>
        <div className="flex items-center gap-9 text-[#777]">
          <button aria-label="最小化" className="h-3 w-3">
            <svg viewBox="0 0 12 12" className="h-3 w-3"><path d="M1 6h10" stroke="currentColor" /></svg>
          </button>
          <button aria-label="还原" className="h-3 w-3">
            <svg viewBox="0 0 12 12" className="h-3 w-3" fill="none" stroke="currentColor"><path d="M1.5 3.5h7v7h-7zM3.5 3.5v-2h7v7h-2" /></svg>
          </button>
          <button aria-label="关闭" className="h-3 w-[11px]">
            <svg viewBox="0 0 11 12" className="h-3 w-[11px]"><path d="M1 1l10 10M11 1L1 11" stroke="currentColor" /></svg>
          </button>
        </div>
      </div>
      <div className="flex h-[21px] items-center justify-between">
        <nav className="flex items-center gap-[15px] text-xs leading-4">
          <svg viewBox="0 0 5 14" className="-mr-2 h-[14px] w-[5px]"><path d="M0 1h4v8H0M4 9l-4 4" fill="none" stroke="#333" /></svg>
          {menus.map((m) => (
            <a key={m} href="#" className="text-[#6e6e6e]">{m}</a>
          ))}
        </nav>
        <div className="flex items-center gap-2 text-[#6d8cae]">
          <button aria-label="最小化子窗口" className="h-3 w-2">
            <svg viewBox="0 0 8 12" className="h-3 w-2"><path d="M1 9h6" stroke="currentColor" strokeWidth="2" /></svg>
          </button>
          <button aria-label="还原子窗口" className="flex h-[18px] w-[18px] items-center justify-center bg-[#ebebeb]">
            <svg viewBox="0 0 10 10" className="h-[10px] w-[10px]" fill="none" stroke="currentColor"><path d="M1.5 4.5h5v4h-5zM3.5 4v-2.5h5v4h-2" /></svg>
          </button>
        </div>
      </div>
      <Watermark />
    </header>
  );
}

function StatusBar() {
  const cell = "h-5 border-r-2 border-[#777] bg-[#eeeeec]";
  return (
    <footer className="flex h-[15px] shrink-0 overflow-hidden border-t-2 border-[#eeeeec] bg-[#eeeeec] text-xs leading-4 text-black">
      <div className="flex w-[1164px] border-t-2 border-r-2 border-[#6c6c6c] border-r-[#999]">
        <button className={`${cell} w-[83px] pr-[14px]`}>显示层</button>
        <button className={`${cell} w-[30px]`}>L</button>
        <button className={`${cell} w-[31px]`}>R</button>
        <button className={`${cell} w-[35px]`}>全部</button>
        {Array.from({ length: 18 }, (_, i) =>
          i === 4 ? (
            <button key={i} className="h-5 w-[49px] border-2 border-[#5fdfe0] bg-white leading-3 text-[#2323c8]">M*</button>
          ) : (
            <button key={i} aria-label={`号型${i + 1}`} className="h-5 w-[49px] border-r-2 border-[#ececec] bg-[#989896]" />
          )
        )}
      </div>
    </footer>
  );
}

export default function App() {
  return (
    <div className="flex h-screen flex-col overflow-hidden bg-[#1e1e1c] font-['Liberation_Sans','Noto_Sans_CJK_SC',sans-serif]">
      <TitleBar />
      <Toolbar />
      <HintBar />
      <div className="flex min-h-0 flex-1">
        <main className="relative min-w-0 flex-1 bg-black">
          <PatternCanvas />
          <PenBar />
          <PropertyDialog />
          <MousePointer />
        </main>
        <ToolBox />
      </div>
      <StatusBar />
      <div className="h-[22px] shrink-0 bg-[#1e1e1c]" />
    </div>
  );
}
